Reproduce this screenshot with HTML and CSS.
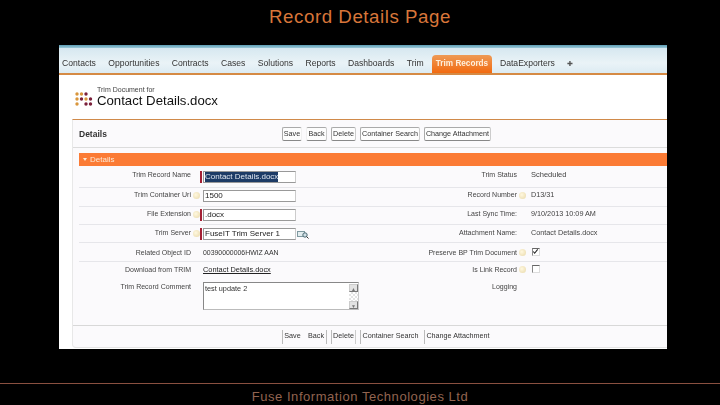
FILE: index.html
```html
<!DOCTYPE html>
<html lang="en">
<head>
<meta charset="utf-8">
<title>Record Details Page</title>
<link rel="stylesheet" href="styles.css">
</head>
<body>
<h1 class="slide-title">Record Details Page</h1>
<main class="shot">
  <div class="stripe"></div>
  <nav class="tabs">
    <span class="tab">Contacts</span>
    <span class="tab">Opportunities</span>
    <span class="tab">Contracts</span>
    <span class="tab">Cases</span>
    <span class="tab">Solutions</span>
    <span class="tab">Reports</span>
    <span class="tab">Dashboards</span>
    <span class="tab">Trim</span>
    <span class="tab tab-active">Trim Records</span>
    <span class="tab">DataExporters</span>
    <span class="tab tab-plus">✚</span>
  </nav>
  <header class="page-head">
    <svg class="logo" width="18" height="15" viewBox="0 0 18 15">
      <g fill="#d9963c"><circle cx="2" cy="2" r="1.7"/><circle cx="6.5" cy="2" r="1.7"/><circle cx="2" cy="7" r="1.7"/><circle cx="2" cy="12" r="1.7"/><circle cx="11" cy="7" r="1.7"/></g>
      <g fill="#7a1f3a"><circle cx="11" cy="2" r="1.7"/><circle cx="6.5" cy="7" r="1.7"/><circle cx="15.5" cy="7" r="1.7"/><circle cx="11" cy="12" r="1.7"/><circle cx="15.5" cy="12" r="1.7"/></g>
    </svg>
    <div class="head-text">
      <div class="head-small">Trim Document for</div>
      <div class="head-big">Contact Details.docx</div>
    </div>
  </header>
  <section class="panel">
    <div class="btn-row btn-row-top">
      <h2 class="panel-title">Details</h2>
      <div class="btns">
        <span class="btn btn-save">Save</span><span class="btn btn-back">Back</span><span class="btn btn-del">Delete</span><span class="btn btn-cs">Container Search</span><span class="btn btn-ca">Change Attachment</span>
      </div>
    </div>
    <div class="section-bar"><span class="caret"></span>Details</div>
    <div class="row row-input row-1 line">
      <div class="cell"><span class="lbl">Trim Record Name</span><span class="help none"></span><span class="req"></span><span class="input selected-wrap"><span class="selected">Contact Details.docx</span></span></div>
      <div class="cell"><span class="lbl lbl-r">Trim Status</span><span class="help none"></span><span class="val val-sm">Scheduled</span></div>
    </div>
    <div class="row row-input row-2 line">
      <div class="cell"><span class="lbl">Trim Container Uri</span><span class="help"></span><span class="noreq"></span><span class="input">1500</span></div>
      <div class="cell"><span class="lbl lbl-r">Record Number</span><span class="help"></span><span class="val">D13/31</span></div>
    </div>
    <div class="row row-input row-3 line">
      <div class="cell"><span class="lbl">File Extension</span><span class="help"></span><span class="req"></span><span class="input">.docx</span></div>
      <div class="cell"><span class="lbl lbl-r">Last Sync Time:</span><span class="help none"></span><span class="val">9/10/2013 10:09 AM</span></div>
    </div>
    <div class="row row-input row-4 line">
      <div class="cell"><span class="lbl">Trim Server</span><span class="help"></span><span class="req"></span><span class="input">FuseIT Trim Server 1</span>
        <svg class="lookup" width="12" height="9" viewBox="0 0 12 9"><rect x="0.5" y="1.5" width="7" height="5" fill="#e4eef0" stroke="#7f9aa0"/><circle cx="8" cy="5" r="2.2" fill="#cfe0e6" stroke="#4d6a74"/><path d="M9.5 6.5L11.5 8.5" stroke="#333"/></svg>
      </div>
      <div class="cell"><span class="lbl lbl-r">Attachment Name:</span><span class="help none"></span><span class="val">Contact Details.docx</span></div>
    </div>
    <div class="row row-5 line">
      <div class="cell"><span class="lbl">Related Object ID</span><span class="help none"></span><span class="noreq"></span><span class="val-l">00390000006HWIZ AAN</span></div>
      <div class="cell"><span class="lbl lbl-r">Preserve BP Trim Document</span><span class="help"></span>
        <span class="check"><svg width="8" height="7" viewBox="0 0 8 7"><path d="M1.5 3.5L3 5.5L6.5 1" fill="none" stroke="#222" stroke-width="1.2"/></svg></span>
      </div>
    </div>
    <div class="row row-6">
      <div class="cell"><span class="lbl">Download from TRIM</span><span class="help none"></span><span class="noreq"></span><span class="link">Contact Details.docx</span></div>
      <div class="cell"><span class="lbl lbl-r">Is Link Record</span><span class="help"></span><span class="check"></span></div>
    </div>
    <div class="row row-comment">
      <div class="cell cell-top"><span class="lbl lbl-top">Trim Record Comment</span><span class="help none"></span><span class="noreq"></span>
        <div class="comment"><span class="comment-text">test update 2</span>
          <div class="scroll"><span class="sb-btn">▲</span><span class="sb-track"></span><span class="sb-btn">▼</span></div>
        </div>
      </div>
      <div class="cell cell-top"><span class="lbl lbl-r lbl-top">Logging</span></div>
    </div>
    <div class="btn-row btn-row-bottom">
      <span class="panel-title"></span>
      <div class="btns">
        <span class="btn btn-save">Save</span><span class="btn btn-back">Back</span><span class="btn btn-del">Delete</span><span class="btn btn-cs">Container Search</span><span class="btn btn-ca">Change Attachment</span>
      </div>
    </div>
  </section>
</main>
<footer class="slide-foot">Fuse Information Technologies Ltd</footer>
</body>
</html>
```
FILE: styles.css
```css
* { box-sizing: border-box; }
html, body { margin: 0; padding: 0; }
body {
  width: 720px;
  height: 405px;
  background: #000;
  overflow: hidden;
  font-family: "Liberation Sans", Arial, sans-serif;
}
.slide-title {
  margin: 0;
  height: 45px;
  padding-top: 6px;
  text-align: center;
  font-size: 18.7px;
  line-height: 22px;
  font-weight: 400;
  letter-spacing: 0.55px;
  color: #d8763a;
}
.shot {
  margin-left: 59px;
  width: 608px;
  height: 304px;
  background: #fff;
  color: #333;
  font-size: 8px;
  filter: blur(0.4px);
  overflow: hidden;
}
.stripe { height: 3px; background: linear-gradient(#5c9db4, #9cc9d8); }
.tabs {
  height: 27px;
  display: flex;
  align-items: flex-end;
  padding-left: 3px;
  background: linear-gradient(#d6e8f0, #eaf3f7 60%, #dcebf2);
  border-bottom: 2px solid #d58a45;
  font-size: 8.6px;
}
.tab { height: 18px; line-height: 17px; color: #333; margin-right: 12.4px; white-space: nowrap; }
.tab-active {
  width: 60px;
  margin-right: 8px;
  margin-left: -4px;
  text-align: center;
  background: linear-gradient(#ee9a55, #f26a10);
  border-radius: 4px 4px 0 0;
  color: #fff0dd;
  font-weight: 700;
  font-size: 8.2px;
}
.tab-plus { color: #555; font-size: 7px; margin-left: 0; }
.page-head { height: 44px; display: flex; padding: 14px 0 0 16px; background: #fff; }
.logo { margin-top: 3px; }
.head-text { margin-left: 4px; }
.head-small { font-size: 7px; line-height: 8px; margin-top: -3px; color: #444; }
.head-big { font-size: 13.2px; line-height: 14px; color: #111; }
.panel {
  margin-left: 13px;
  height: 229px;
  background: #fbfafc;
  border-top: 1px solid #d08a4a;
  border-left: 1px solid #e8e8e8;
  border-bottom: 1px solid #e4e4e4;
  border-radius: 0 0 0 4px;
}
.btn-row { display: flex; align-items: center; height: 28px; }
.btn-row-top { border-bottom: 1px solid #dcdcdc; }
.panel-title { margin: 0 0 0 6px; width: 203px; flex: none; font-size: 8.5px; font-weight: 700; color: #333; }
.btns { display: flex; }
.btn {
  display: block;
  height: 14px;
  line-height: 12px;
  text-align: center;
  font-size: 7.2px;
  color: #333;
  background: #fdfdfd;
  border: 1px solid #aaa;
  border-right-color: #ccc;
  border-bottom-color: #888;
  border-radius: 2px;
  margin-right: 4px;
  white-space: nowrap;
}
.btn-save { width: 20px; border-right-color: #f0f0f0; }
.btn-back { width: 21px; border-left-color: #f0f0f0; }
.btn-del { width: 25px; }
.btn-cs { width: 60px; }
.btn-ca { width: 67px; }
.btn-row-bottom { border-top: 1px solid #d8d8d8; height: 22px; }
.btn-row-bottom .btn { border: 0; border-left: 1px solid #bbb; background: transparent; border-radius: 0; }
.btn-row-bottom .btn-back { border-left: 0; border-right: 1px solid #bbb; }
.btn-row-bottom .btn-del { border-right: 1px solid #ccc; }
.section-bar {
  margin: 5px 0 0 6px;
  height: 13px;
  padding-left: 4px;
  background: #fb7b35;
  color: #fde8d4;
  font-size: 8px;
  display: flex;
  align-items: center;
}
.caret {
  width: 0; height: 0;
  margin-right: 3px;
  border-left: 2.5px solid transparent;
  border-right: 2.5px solid transparent;
  border-top: 3.5px solid #fde8d4;
}
.row { display: flex; margin-left: 6px; }
.row-1 { height: 22px; padding-top: 5px; }
.row-2 { height: 19px; padding-top: 2px; }
.row-3 { height: 18px; padding-top: 2px; }
.row-4 { height: 18px; padding-top: 3px; }
.row-5 { height: 19px; padding-top: 3px; }
.row-6 { height: 15px; padding-top: 1px; }
.line { border-bottom: 1px solid #e6e6ea; }
.row-comment { height: 48px; padding-top: 5px; }
.cell { display: flex; align-items: center; width: 289px; height: 12px; flex: none; }
.cell + .cell { width: 299px; }
.cell-top { align-items: flex-start; height: auto; }
.lbl { width: 112px; flex: none; text-align: right; font-size: 7px; color: #444; white-space: nowrap; }
.lbl-r { width: 149px; }
.lbl-top { margin-top: 1px; }
.row-input .lbl, .row-input .val { margin-bottom: 4px; }
.row-1 .lbl, .row-1 .val { margin-bottom: 6px; }
.row-input .help { margin-bottom: 2px; }
.help {
  width: 7px; height: 7px; margin-left: 2px; flex: none;
  border-radius: 50%;
  background: radial-gradient(circle at 40% 40%, #fff8e0, #e8d8a8);
}
.help.none { background: none; }
.req { width: 2px; height: 12px; margin-right: 1px; background: #a32034; flex: none; }
.noreq { width: 3px; flex: none; }
.input {
  width: 93px; height: 12px; flex: none;
  line-height: 10px;
  padding-left: 1px;
  background: #fff;
  border: 1px solid #999;
  border-right-color: #ccc;
  font-size: 8px;
  color: #222;
  white-space: nowrap;
  overflow: hidden;
}
.selected { display: inline-block; height: 10px; background: #1d3b66; color: #dfe6f0; }
.val { margin-left: 5px; font-size: 7.25px; color: #444; white-space: nowrap; }
.val-sm { font-size: 7.5px; }
.val-l { font-size: 6.9px; color: #333; white-space: nowrap; }
.link { font-size: 7.4px; color: #222; text-decoration: underline; white-space: nowrap; }
.lookup { margin-left: 1px; }
.check {
  width: 8px; height: 8px; margin-left: 6px; flex: none;
  background: #fff;
  border-top: 1px solid #666;
  border-left: 1px solid #888;
  border-right: 1px solid #ddd;
  border-bottom: 1px solid #ddd;
  display: flex;
}
.check svg { margin: -1px 0 0 -1px; }
.comment {
  width: 156px; height: 28px; flex: none;
  display: flex;
  justify-content: space-between;
  background: #fff;
  border: 1px solid #888;
  border-bottom-color: #bbb;
  border-right-color: #ccc;
}
.comment-text { font-size: 7.3px; line-height: 11px; padding-left: 1px; color: #333; }
.scroll { width: 9px; flex: none; display: flex; flex-direction: column; margin: 1px 0 0; }
.sb-btn { height: 8px; background: #e2e2e2; color: #777; font-size: 5px; line-height: 8px; text-align: center; border: 1px solid #ccc; border-right-color: #777; border-bottom-color: #777; overflow: hidden; }
.sb-track { flex: 1; background: repeating-conic-gradient(#e4e4e4 0 25%, #fff 0 50%) 0 0 / 4px 4px; }
.slide-foot {
  margin-top: 34px;
  height: 22px;
  border-top: 1px solid #8a5040;
  text-align: center;
  font-size: 13px;
  line-height: 25px;
  letter-spacing: 0.55px;
  color: #926450;
}
```
